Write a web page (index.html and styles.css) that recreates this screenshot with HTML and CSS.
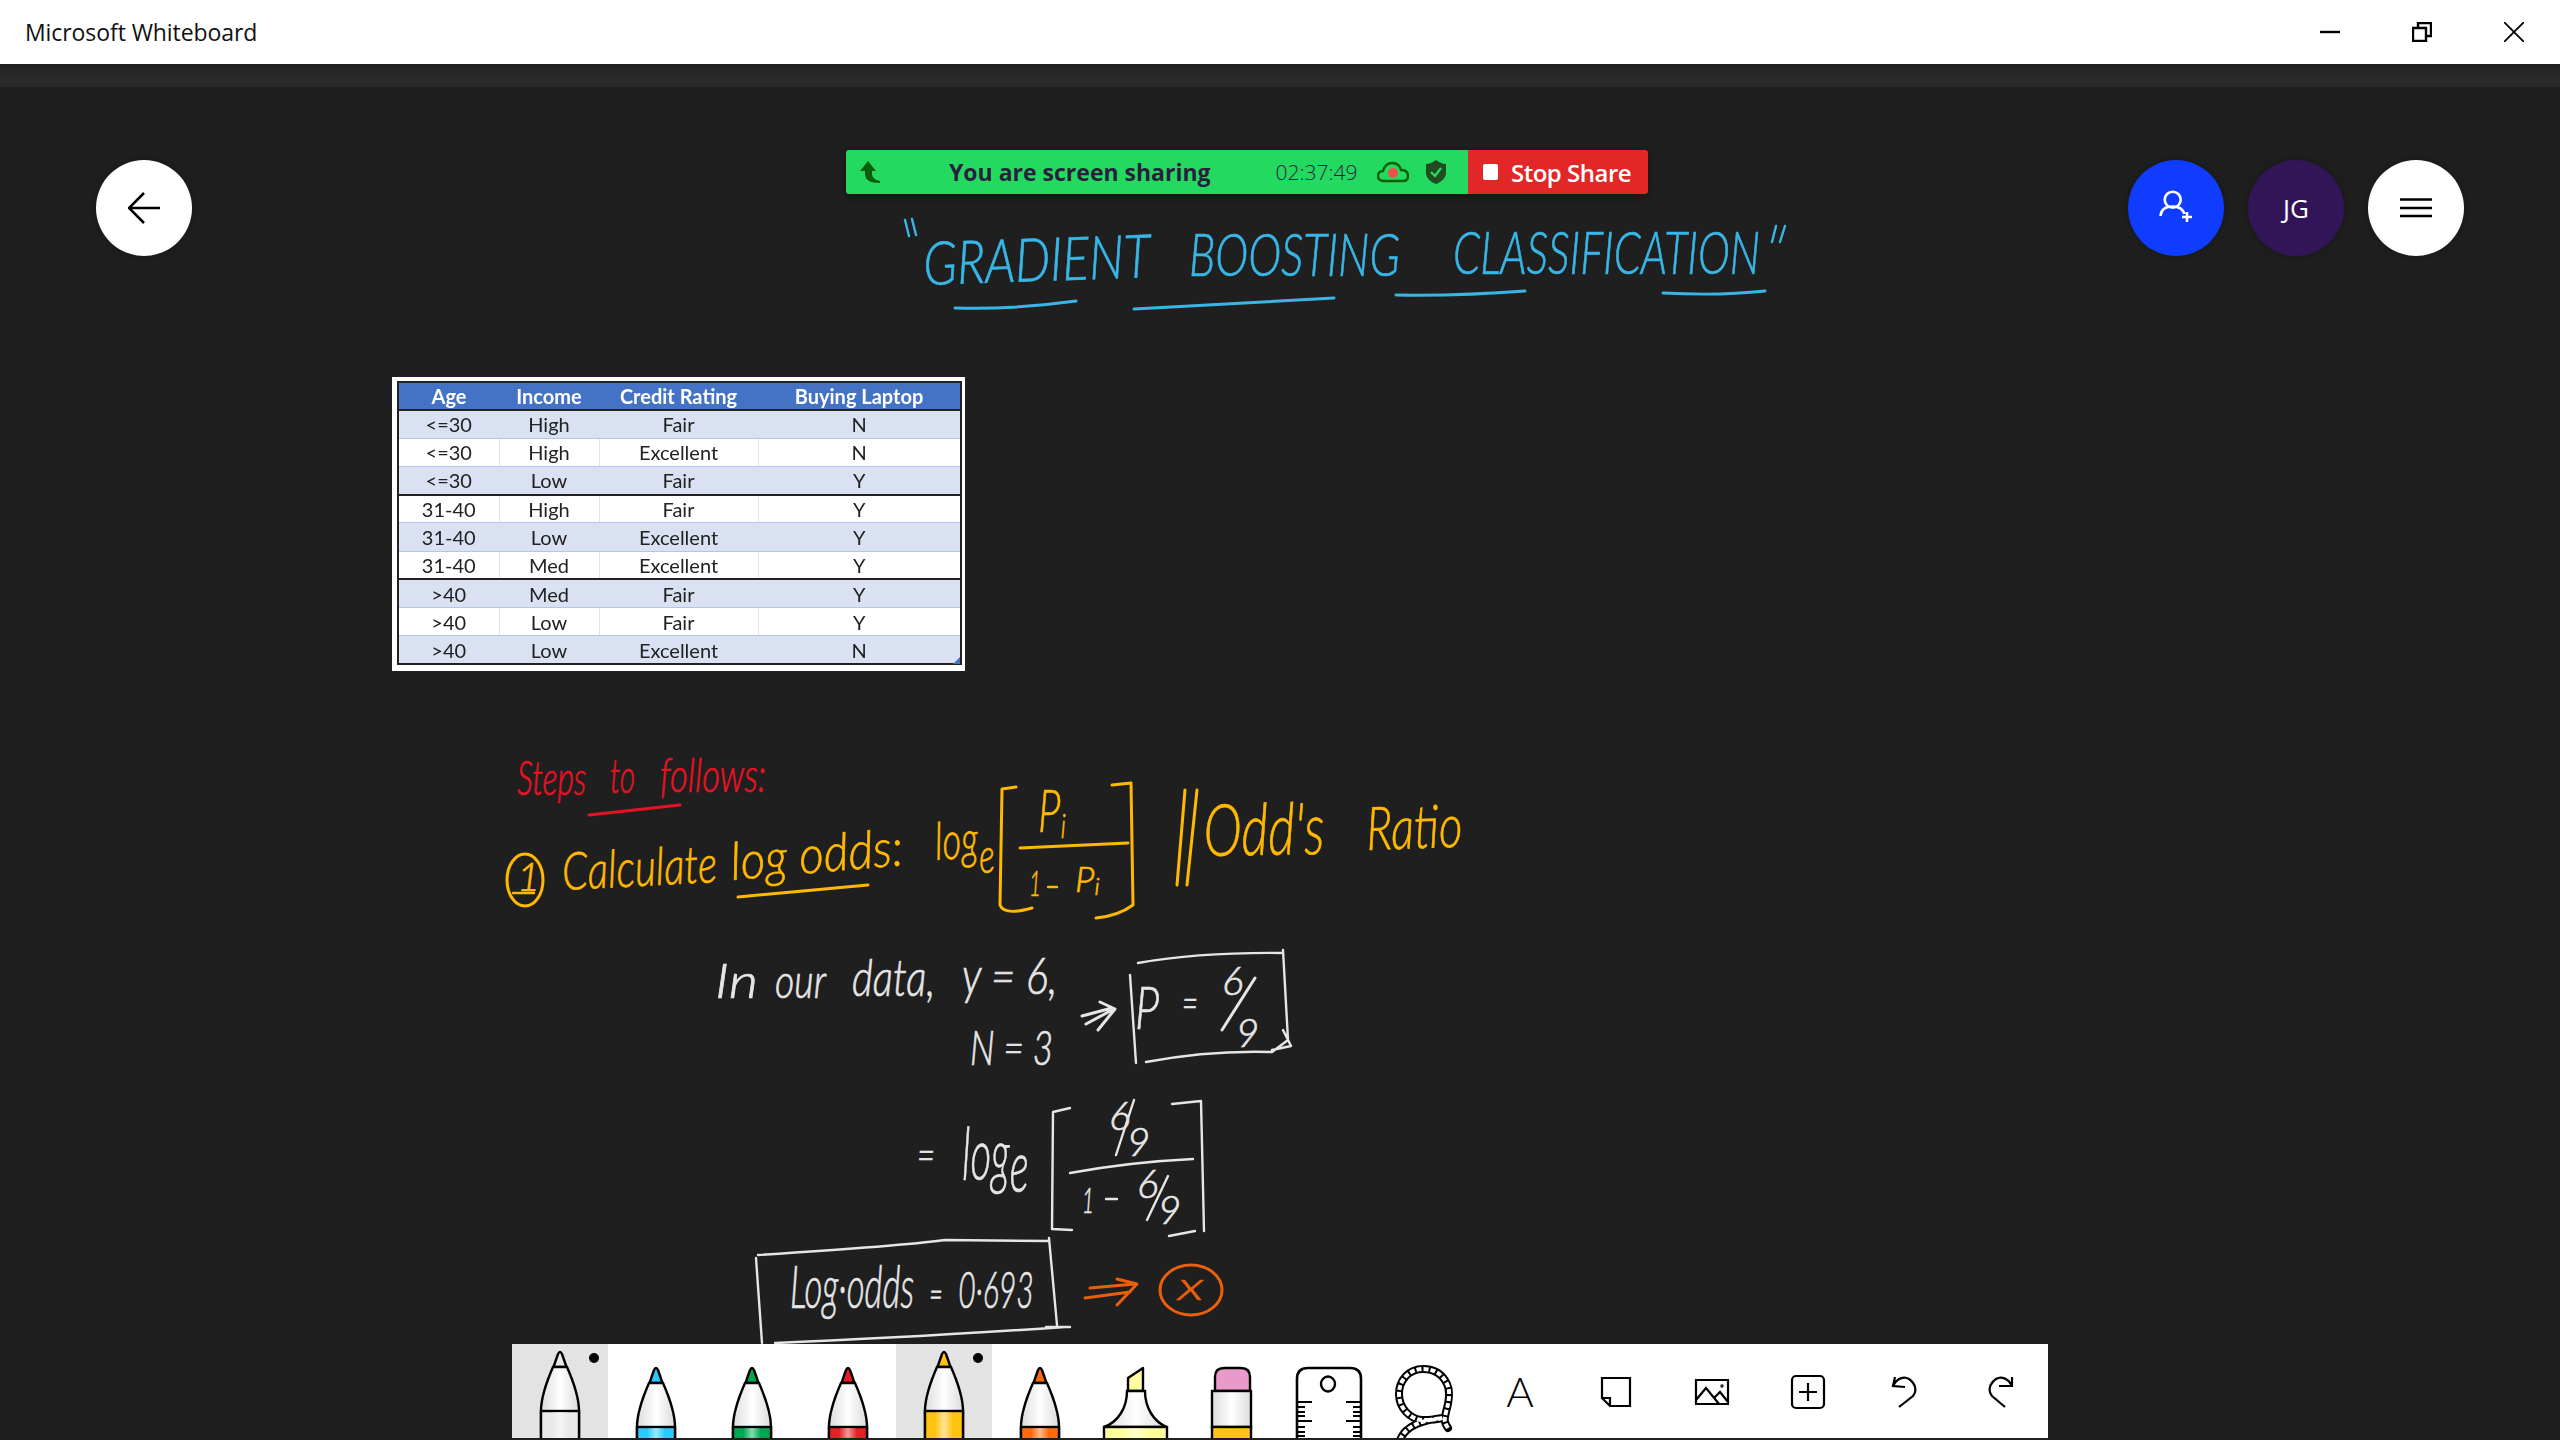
FILE: index.html
```html
<!DOCTYPE html>
<html lang="en">
<head>
  <meta charset="UTF-8" />
  <title>Microsoft Whiteboard</title>
  <link rel="stylesheet" href="styles.css">
</head>
<body>

  <!-- Shared symbols -->
  <svg class="defs" width="0" height="0">
    <defs>
      <linearGradient id="body-grad">
        <stop offset="0" stop-color="#dcdcdc" />
        <stop offset="0.5" stop-color="#ffffff" />
        <stop offset="1" stop-color="#dcdcdc" />
      </linearGradient>
      <linearGradient id="stripe">
        <stop offset="0.25" stop-color="#ffffff" stop-opacity="0" />
        <stop offset="0.5" stop-color="#ffffff" stop-opacity="0.55" />
        <stop offset="0.75" stop-color="#ffffff" stop-opacity="0" />
      </linearGradient>
      <symbol id="pen" viewBox="0 0 96 120" width="96" height="120" overflow="visible">
        <path d="M41.5 39L46 26Q48 22 50 26L54.5 39Z" fill="currentColor" stroke="#000" stroke-width="2.4" stroke-linejoin="round" />
        <path d="M41 39H55C62 55 67 70 67 83V122H29V83C29 70 34 55 41 39Z" fill="url(#body-grad)" stroke="#000" stroke-width="2.4" />
        <rect x="29" y="83" width="38" height="39" fill="currentColor" stroke="#000" stroke-width="2.4" />
        <rect x="30" y="84" width="36" height="37" fill="url(#stripe)" />
      </symbol>
    </defs>
  </svg>

  <div class="app">

    <!-- Title bar -->
    <header class="titlebar">
      <span class="app-title">Microsoft Whiteboard</span>
      <div class="window-controls">
        <svg class="win-btn" width="20" height="20" viewBox="0 0 20 20"><path d="M0 10H20" /></svg>
        <svg class="win-btn" width="20" height="20" viewBox="0 0 20 20"><path d="M1 6H14V19H1ZM6 6V1H19V14H14" /></svg>
        <svg class="win-btn win-close" width="20" height="20" viewBox="0 0 20 20"><path d="M0 0L20 20M20 0L0 20" /></svg>
      </div>
    </header>

    <!-- Board -->
    <main class="board">
      <div class="board-band"></div>

      <div class="top-row">
        <button class="round-btn btn-white">
          <svg width="32" height="32" viewBox="0 0 32 32"><path class="line-dark" d="M32 16H1M16 1L1 16L16 31" /></svg>
        </button>
        <div class="top-right">
          <button class="round-btn btn-blue">
            <svg width="40" height="40" viewBox="0 0 40 40"><circle class="line-light" cx="16.7" cy="11.7" r="8" /><path class="line-light" d="M4.5 28C5 21 10 18.5 16.7 18.5S27 21 28.5 26M26 29H36M31 24V34" /></svg>
          </button>
          <button class="round-btn btn-purple">JG</button>
          <button class="round-btn btn-white">
            <svg width="32" height="20" viewBox="0 0 32 20"><path class="line-dark" d="M0 1.5H32M0 10H32M0 18H32" /></svg>
          </button>
        </div>
      </div>

      <!-- Toolbar -->
      <div class="toolbar">
        <div class="tool tool-on"><svg class="pen-svg pen-clear" viewBox="0 0 96 94"><use class="raised" href="#pen" /></svg></div>
        <div class="tool"><svg class="pen-svg pen-blue" viewBox="0 0 96 94"><use href="#pen" /></svg></div>
        <div class="tool"><svg class="pen-svg pen-green" viewBox="0 0 96 94"><use href="#pen" /></svg></div>
        <div class="tool"><svg class="pen-svg pen-red" viewBox="0 0 96 94"><use href="#pen" /></svg></div>
        <div class="tool tool-on"><svg class="pen-svg pen-yellow" viewBox="0 0 96 94"><use class="raised" href="#pen" /></svg></div>
        <div class="tool"><svg class="pen-svg pen-orange" viewBox="0 0 96 94"><use href="#pen" /></svg></div>
        <!-- highlighter -->
        <div class="tool"><svg class="pen-svg" viewBox="0 0 96 94">
          <path d="M40 47V34L55 24V47Z" fill="#ffffa0" stroke="#000" stroke-width="2.4" stroke-linejoin="round" />
          <path d="M39 47H57C57 64 66 78 79 83H16C30 78 39 64 39 47Z" fill="url(#body-grad)" stroke="#000" stroke-width="2.4" />
          <rect x="16" y="83" width="63" height="14" fill="#ffff99" stroke="#000" stroke-width="2.4" />
          <rect x="17" y="84" width="61" height="12" fill="url(#stripe)" />
        </svg></div>
        <!-- eraser -->
        <div class="tool"><svg class="pen-svg" viewBox="0 0 96 94">
          <path d="M31 47V33Q31 24 40 24H57Q66 24 66 33V47Z" fill="#ea9aca" stroke="#000" stroke-width="2.4" />
          <rect x="28" y="47" width="39" height="36" fill="url(#body-grad)" stroke="#000" stroke-width="2.4" />
          <rect x="28" y="83" width="39" height="14" fill="#ffc215" stroke="#000" stroke-width="2.4" />
        </svg></div>
        <!-- ruler -->
        <div class="tool"><svg class="pen-svg" viewBox="0 0 96 94">
          <path d="M17 98V35Q17 24 28 24H70Q81 24 81 35V98" fill="#fff" stroke="#000" stroke-width="2.6" />
          <ellipse cx="48" cy="40" rx="7" ry="7.5" fill="none" stroke="#000" stroke-width="2.4" />
          <path d="M17 58H32M17 63H25M17 68H25M17 72H25M17 77H32M17 83H25M17 88H25M17 92H25M81 58H66M81 63H73M81 68H73M81 72H73M81 77H66M81 83H73M81 88H73M81 92H73" stroke="#000" stroke-width="2.2" fill="none" />
        </svg></div>
        <!-- lasso -->
        <div class="tool"><svg class="pen-svg" viewBox="0 0 96 94">
          <g fill="none">
            <path d="M72 84C68 78 68 76 70 68C74 54 74 46 71 40C66 29 57 25 47 25C33 25 23 36 23 50C23 64 34 75 46 76C54 76 60 76 66 74C50 76 30 80 24 96" stroke="#000" stroke-width="8" stroke-linecap="round" />
            <path d="M72 84C68 78 68 76 70 68C74 54 74 46 71 40C66 29 57 25 47 25C33 25 23 36 23 50C23 64 34 75 46 76C54 76 60 76 66 74C50 76 30 80 24 96" stroke="#fff" stroke-width="4" stroke-dasharray="5 2" />
          </g>
        </svg></div>
        <div class="tool tool-text">A</div>
        <!-- note -->
        <div class="tool"><svg class="pen-svg line-icon" viewBox="0 0 96 94">
          <path d="M34 34H62V62H42L34 54ZM34 54H42V62" />
        </svg></div>
        <!-- image -->
        <div class="tool"><svg class="pen-svg line-icon" viewBox="0 0 96 94">
          <path d="M32 36H64V60H32ZM32 56L42 44L55 60M50 54L56 48L64 58" />
          <circle cx="58" cy="42" r="0.6" />
        </svg></div>
        <!-- add -->
        <div class="tool"><svg class="pen-svg line-icon" viewBox="0 0 96 94">
          <rect x="32" y="32" width="32" height="32" rx="4" />
          <path d="M48 39V57M39 48H57" />
        </svg></div>
        <!-- undo -->
        <div class="tool"><svg class="pen-svg line-icon" viewBox="0 0 96 94">
          <path d="M39 33L37 42L49 43M37 42C41 34 48 32 53 35C60 40 61 47 57 52L43 63" />
        </svg></div>
        <!-- redo -->
        <div class="tool"><svg class="pen-svg line-icon" viewBox="0 0 96 94">
          <path d="M60 33V42L47 42M60 42C56 34 49 32 44 35C37 40 36 47 40 52L53 63" />
        </svg></div>
      </div>
    </main>

    <!-- Screen share bar -->
    <div class="share-bar">
      <div class="share-info">
        <svg class="share-arrow" width="20" height="22" viewBox="0 0 20 22"><path d="M8 0L16 10H12V13C12 16 15 19 20 20V22C10 22 5 19 5 13V10H0Z" /></svg>
        <span class="share-text">You are screen sharing</span>
        <span class="share-time">02:37:49</span>
        <svg class="share-cloud" width="32" height="22" viewBox="0 0 32 22"><path d="M7 20C3 20 1 18 1 15C1 12 3 10 6 10C7 5 11 2 15 2C20 2 23 5 24 9C28 9 31 11 31 15C31 18 29 20 26 20Z" /><circle cx="16" cy="12" r="5" /></svg>
        <svg class="share-shield" width="20" height="24" viewBox="0 0 20 24"><path class="shield-body" d="M10 0C13 2 16 4 20 4V13C20 18 15 22 10 24C5 22 0 18 0 13V4C4 4 7 2 10 0Z" /><path class="shield-check" d="M5 12L9 16L15 8" /></svg>
      </div>
      <div class="stop-share"><span class="stop-box"></span>Stop Share</div>
    </div>

    <!-- Pasted table -->
    <div class="table-shot">
      <table class="data-table">
        <colgroup>
          <col class="col-age"><col class="col-income"><col class="col-credit"><col class="col-buy">
        </colgroup>
        <thead>
          <tr><th>Age</th><th>Income</th><th>Credit Rating</th><th>Buying Laptop</th></tr>
        </thead>
        <tbody>
          <tr><td>&lt;=30</td><td>High</td><td>Fair</td><td>N</td></tr>
          <tr><td>&lt;=30</td><td>High</td><td>Excellent</td><td>N</td></tr>
          <tr class="group-end"><td>&lt;=30</td><td>Low</td><td>Fair</td><td>Y</td></tr>
          <tr><td>31-40</td><td>High</td><td>Fair</td><td>Y</td></tr>
          <tr><td>31-40</td><td>Low</td><td>Excellent</td><td>Y</td></tr>
          <tr class="group-end"><td>31-40</td><td>Med</td><td>Excellent</td><td>Y</td></tr>
          <tr><td>&gt;40</td><td>Med</td><td>Fair</td><td>Y</td></tr>
          <tr><td>&gt;40</td><td>Low</td><td>Fair</td><td>Y</td></tr>
          <tr><td>&gt;40</td><td>Low</td><td>Excellent</td><td>N</td></tr>
        </tbody>
      </table>
    </div>

    <!-- Ink on the canvas -->
    <svg class="ink-layer" width="2560" height="1440" viewBox="0 0 2560 1440">
      <!-- title -->
      <g class="ink-blue">
        <text class="ink-text size-title" x="924" y="285" textLength="227" lengthAdjust="spacingAndGlyphs" transform="rotate(-2 924 285)">GRADIENT</text>
        <text class="ink-text size-title" x="1189" y="276" textLength="211" lengthAdjust="spacingAndGlyphs">BOOSTING</text>
        <text class="ink-text size-title" x="1453" y="274" textLength="307" lengthAdjust="spacingAndGlyphs">CLASSIFICATION</text>
        <path class="ink-line thin" d="M905 220L909 236M912 219L916 235M1776 226L1772 242M1785 226L1780 242" />
        <path class="ink-line" d="M955 308Q1010 310 1076 301M1134 309Q1230 304 1334 298M1396 295Q1460 296 1525 291M1663 293Q1720 296 1765 291" />
      </g>

      <!-- steps -->
      <g class="ink-red">
        <text class="ink-text size-48" transform="translate(517 795) scale(0.66 1)">Steps</text>
        <text class="ink-text size-48" x="610" y="793" textLength="25" lengthAdjust="spacingAndGlyphs">to</text>
        <text class="ink-text size-48" x="660" y="792" textLength="106" lengthAdjust="spacingAndGlyphs">follows:</text>
        <path class="ink-line" d="M589 815L680 805" />
      </g>

      <!-- step one -->
      <g class="ink-yellow">
        <ellipse class="ink-line" cx="525" cy="880" rx="18" ry="26" />
        <text class="ink-text size-40" x="517" y="891">1</text>
        <path class="ink-line thin" d="M513 893H534" />
        <text class="ink-text size-52" x="563" y="890" textLength="155" lengthAdjust="spacingAndGlyphs" transform="rotate(-3 563 890)">Calculate</text>
        <text class="ink-text size-52" x="732" y="880" textLength="173" lengthAdjust="spacingAndGlyphs" transform="rotate(-5 732 880)">log odds:</text>
        <path class="ink-line" d="M738 897L868 885" />
        <text class="ink-text size-52" transform="translate(936 860) rotate(-4) scale(0.7 1)">log<tspan class="size-48" dy="16">e</tspan></text>
        <path class="ink-line" d="M1016 787L1002 789L1000 905Q1004 916 1032 908M1112 785L1131 783L1133 905Q1118 916 1096 918M1020 848L1128 843" />
        <text class="ink-text size-60" transform="translate(1038 832) scale(0.7 1)">P<tspan class="size-34" dy="6">i</tspan></text>
        <text class="ink-text size-36" x="1029" y="896" textLength="12" lengthAdjust="spacingAndGlyphs">1</text>
        <path class="ink-line thin" d="M1048 887H1057" />
        <text class="ink-text size-36" transform="translate(1075 892)">P<tspan class="size-24" dy="3">i</tspan></text>
        <path class="ink-line" d="M1185 790L1177 885M1197 790L1187 885" />
        <text class="ink-text size-72" x="1204" y="856" textLength="121" lengthAdjust="spacingAndGlyphs" transform="rotate(-1 1204 856)">Odd's</text>
        <text class="ink-text size-60" x="1367" y="850" textLength="96" lengthAdjust="spacingAndGlyphs" transform="rotate(-2 1367 850)">Ratio</text>
      </g>

      <!-- working -->
      <g class="ink-white">
        <text class="ink-text size-48" x="715" y="998" textLength="43" lengthAdjust="spacingAndGlyphs">In</text>
        <text class="ink-text size-48" x="775" y="998" textLength="51" lengthAdjust="spacingAndGlyphs">our</text>
        <text class="ink-text size-52" x="852" y="996" textLength="83" lengthAdjust="spacingAndGlyphs">data,</text>
        <text class="ink-text size-52" x="962" y="994" textLength="95" lengthAdjust="spacingAndGlyphs">y = 6,</text>
        <text class="ink-text size-48" x="970" y="1065" textLength="83" lengthAdjust="spacingAndGlyphs">N = 3</text>
        <path class="ink-line" d="M1082 1016L1112 1008M1086 1024L1112 1010M1100 1002L1115 1009L1098 1030" />
        <path class="ink-line thin" d="M1138 963Q1200 952 1283 953M1283 950L1288 1040L1272 1052Q1210 1050 1146 1062M1130 975L1136 1063M1283 1030L1291 1046L1272 1050" />
        <text class="ink-text size-60" transform="translate(1135 1029) scale(0.75 1)">P</text>
        <text class="ink-text size-48" x="1182" y="1020" textLength="16" lengthAdjust="spacingAndGlyphs">=</text>
        <text class="ink-text size-40" x="1222" y="995">6</text>
        <text class="ink-text size-40" x="1236" y="1047">9</text>
        <path class="ink-line" d="M1255 978L1222 1030" />

        <text class="ink-text size-48" x="917" y="1172" textLength="18" lengthAdjust="spacingAndGlyphs">=</text>
        <text class="ink-text size-72" transform="translate(962 1180) scale(0.56 1)">log<tspan dy="12">e</tspan></text>
        <path class="ink-line thin" d="M1070 1108L1053 1112L1052 1229L1072 1230M1172 1104L1201 1101L1204 1231M1169 1236L1195 1231M1070 1173Q1130 1162 1193 1159" />
        <text class="ink-text size-40" x="1109" y="1130">6<tspan x="1127" y="1156">9</tspan></text>
        <path class="ink-line thin" d="M1134 1100L1116 1155" />
        <text class="ink-text size-36" x="1082" y="1213" textLength="12" lengthAdjust="spacingAndGlyphs">1</text>
        <path class="ink-line thin" d="M1106 1199H1117" />
        <text class="ink-text size-40" x="1137" y="1198">6<tspan x="1158" y="1224">9</tspan></text>
        <path class="ink-line thin" d="M1168 1176L1147 1220" />

        <path class="ink-line thin" d="M758 1255Q900 1246 945 1240L1049 1241M1049 1238L1057 1325M1046 1327H1070M775 1343Q900 1338 1065 1327M756 1258L762 1343" />
        <text class="ink-text size-60" transform="translate(790 1308) scale(0.58 1)">Log·odds<tspan class="size-40" x="240">=</tspan><tspan class="size-52" x="290">0·693</tspan></text>
      </g>

      <!-- answer -->
      <g class="ink-orange">
        <path class="ink-line" d="M1090 1288L1135 1284M1085 1298L1130 1292M1117 1279L1137 1284L1117 1305" />
        <ellipse class="ink-line" cx="1191" cy="1290" rx="31" ry="25" />
        <text class="ink-text size-40" x="1178" y="1300" textLength="26" lengthAdjust="spacingAndGlyphs">x</text>
      </g>
    </svg>
  </div>

</body>
</html>
```
FILE: styles.css
```css
* {
  margin: 0;
  padding: 0;
  box-sizing: border-box;
}
html, body {
  width: 2560px;
  height: 1440px;
  overflow: hidden;
  background: #1f1f1f;
}
.defs {
  position: absolute;
}
.app {
  position: relative;
  display: flex;
  flex-direction: column;
  height: 1440px;
  font-family: "Open Sans", sans-serif;
}

/* Title bar */
.titlebar {
  display: flex;
  align-items: center;
  justify-content: space-between;
  height: 64px;
  padding-left: 25px;
  background: #fff;
}
.app-title {
  font-size: 23px;
  letter-spacing: -0.08px;
  color: #111;
}
.window-controls {
  display: flex;
  align-items: center;
  gap: 72px;
  padding-right: 36px;
}
.win-btn {
  fill: none;
  stroke: #000;
  stroke-width: 2.4;
}
.win-close {
  stroke-width: 1.8;
}

/* Board */
.board {
  position: relative;
  flex: 1;
  display: flex;
  flex-direction: column;
  background: #1f1f1f;
}
.board-band {
  height: 23px;
  background: linear-gradient(to bottom, #1f1f1f, #2a2a2a 50%, #2a2a2a);
}
.top-row {
  display: flex;
  justify-content: space-between;
  padding: 73px 96px 0;
}
.top-right {
  display: flex;
  gap: 24px;
}
.round-btn {
  display: flex;
  align-items: center;
  justify-content: center;
  width: 96px;
  height: 96px;
  border: 0;
  border-radius: 50%;
  box-shadow: 0 0 8px rgba(0, 0, 0, 0.3);
}
.btn-white {
  background: #fff;
}
.btn-blue {
  background: #0f3cff;
}
.btn-purple {
  background: #311558;
  color: #fff;
  font-family: "Open Sans", sans-serif;
  font-size: 26px;
  font-weight: 400;
}
.line-dark {
  fill: none;
  stroke: #000;
  stroke-width: 2.6;
}
.line-light {
  fill: none;
  stroke: #fff;
  stroke-width: 2.6;
}

/* Toolbar */
.toolbar {
  position: relative;
  z-index: 2;
  display: flex;
  align-self: center;
  height: 94px;
  margin-top: auto;
  margin-bottom: 2px;
  background: #fff;
}
.tool {
  position: relative;
  width: 96px;
  height: 94px;
  overflow: hidden;
}
.tool-on {
  background: #e3e3e3;
}
.tool-on::after {
  content: "";
  position: absolute;
  top: 9px;
  right: 9px;
  width: 10px;
  height: 10px;
  border-radius: 50%;
  background: #000;
}
.tool-text {
  display: flex;
  justify-content: center;
  padding-top: 22px;
  font-family: "Lato", sans-serif;
  font-size: 42px;
  font-weight: 300;
  line-height: 50px;
  color: #000;
}
.pen-svg {
  display: block;
  width: 96px;
  height: 94px;
}
.raised {
  transform: translateY(-16px);
}
.line-icon {
  fill: none;
  stroke: #000;
  stroke-width: 2.2;
}
.pen-clear { color: #e8e8e8; }
.pen-blue { color: #2fc5ff; }
.pen-green { color: #00a651; }
.pen-red { color: #ec1c24; }
.pen-yellow { color: #ffc20e; }
.pen-orange { color: #fe6a10; }

/* Screen share bar */
.share-bar {
  position: absolute;
  top: 150px;
  left: 846px;
  z-index: 3;
  display: flex;
  width: 802px;
  height: 44px;
  border-radius: 3px;
  overflow: hidden;
  box-shadow: 0 2px 8px rgba(0, 0, 0, 0.4);
}
.share-info {
  display: flex;
  align-items: center;
  width: 622px;
  padding-left: 14px;
  background: #24d95f;
  color: #2a1f3d;
}
.share-arrow {
  fill: #0b5e0b;
}
.share-text {
  margin-left: 69px;
  font-size: 23px;
  font-weight: 700;
  white-space: nowrap;
}
.share-time {
  margin-left: 65px;
  font-size: 21px;
  font-weight: 300;
}
.share-cloud {
  margin-left: 19px;
  fill: none;
  stroke: #0b5e0b;
  stroke-width: 2.4;
}
.share-cloud circle {
  fill: #f0504a;
  stroke: none;
}
.share-shield {
  margin-left: 17px;
}
.shield-body {
  fill: #1f4d1f;
}
.shield-check {
  fill: none;
  stroke: #24d95f;
  stroke-width: 2.4;
}
.stop-share {
  flex: 1;
  display: flex;
  align-items: center;
  padding-left: 15px;
  background: #e12727;
  color: #fff;
  font-size: 24px;
  font-weight: 600;
  letter-spacing: -0.5px;
  white-space: nowrap;
}
.stop-box {
  width: 15px;
  height: 16px;
  margin-right: 13px;
  border-radius: 2px;
  background: #fff;
}

/* Pasted table */
.table-shot {
  position: absolute;
  top: 377px;
  left: 392px;
  width: 573px;
  height: 294px;
  padding: 4px 5px;
  background: #fff;
  filter: blur(0.4px);
}
.table-shot::after {
  content: "";
  position: absolute;
  right: 5px;
  bottom: 7px;
  border-left: 7px solid transparent;
  border-bottom: 7px solid #4472c4;
}
.data-table {
  width: 563px;
  height: 284px;
  border: 2px solid #222;
  border-collapse: collapse;
  table-layout: fixed;
  font-family: "Lato", sans-serif;
  font-size: 20px;
  color: #222;
  text-align: center;
}
.col-age { width: 101px; }
.col-income { width: 100px; }
.col-credit { width: 159px; }
.col-buy { width: 203px; }
.data-table th {
  height: 28px;
  background: #4472c4;
  color: #fff;
  font-weight: 700;
  border-bottom: 2px solid #222;
}
.data-table td {
  height: 28px;
  padding: 0;
  border-bottom: 1px solid #b4c6e7;
  border-right: 1px solid #e4e4e4;
}
.data-table tbody tr:nth-child(odd) td {
  background: #d9e1f2;
  border-right-color: #d9e1f2;
}
.data-table tr.group-end td {
  border-bottom: 2px solid #222;
}

/* Ink */
.ink-layer {
  position: absolute;
  top: 0;
  left: 0;
  pointer-events: none;
}
.ink-text {
  font-family: "Lato", sans-serif;
  font-style: italic;
  font-weight: 300;
  fill: currentColor;
  stroke: currentColor;
  stroke-width: 0.7;
}
.ink-line {
  fill: none;
  stroke: currentColor;
  stroke-width: 3;
  stroke-linecap: round;
  stroke-linejoin: round;
}
.ink-line.thin {
  stroke-width: 2.4;
}
.ink-blue { color: #38b6e6; }
.ink-red { color: #e81224; }
.ink-yellow { color: #ffb900; }
.ink-white { color: #e6e6e6; }
.ink-orange { color: #ea5f0c; }
.size-title { font-size: 60px; }
.size-24 { font-size: 24px; }
.size-34 { font-size: 34px; }
.size-36 { font-size: 36px; }
.size-40 { font-size: 40px; }
.size-48 { font-size: 48px; }
.size-52 { font-size: 52px; }
.size-60 { font-size: 60px; }
.size-72 { font-size: 72px; }
```
